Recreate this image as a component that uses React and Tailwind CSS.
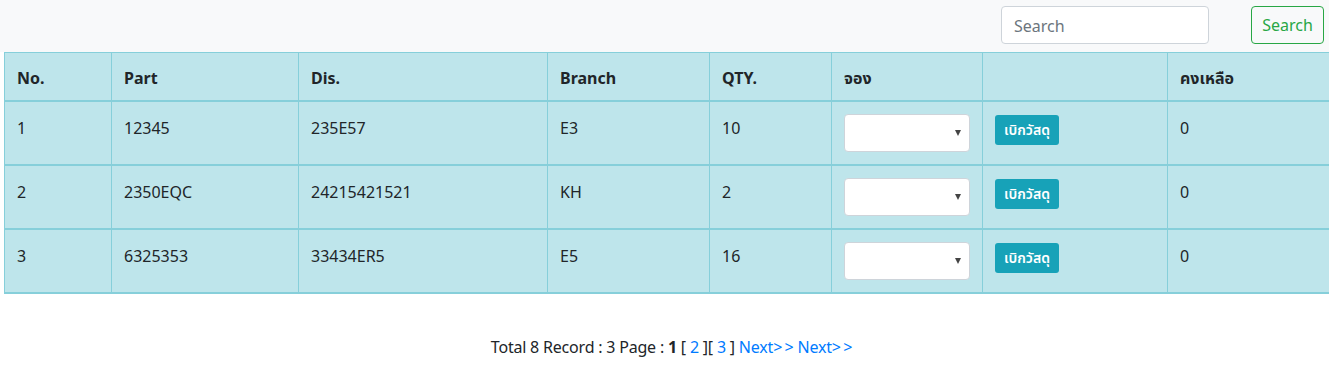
import React from "react";

const rows = [
  { no: "1", part: "12345", dis: "235E57", branch: "E3", qty: "10", left: "0" },
  { no: "2", part: "2350EQC", dis: "24215421521", branch: "KH", qty: "2", left: "0" },
  { no: "3", part: "6325353", dis: "33434ER5", branch: "E5", qty: "16", left: "0" },
];

const widths = [107, 187, 249, 162, 122, 151, 185, 167];

export default function App() {
  const font = { fontFamily: '"Segoe UI", "Noto Sans", "Noto Sans Thai", sans-serif' };
  return (
    <div className="w-[1329px] h-[370px] bg-white text-[#212529] text-base overflow-hidden" style={font}>
      <div className="h-[52px] bg-[#f8f9fa] flex items-start justify-end pt-[6px] pr-[5px]">
        <input
          className="w-[208px] h-[38px] border border-[#ced4da] rounded-[4px] bg-white px-3 pt-[1px] text-base text-[#495057] placeholder:text-[#6c757d] outline-none"
          placeholder="Search"
        />
        <button className="ml-[42px] h-[38px] w-[73px] border border-[#28a745] rounded-[4px] text-[#28a745] text-base bg-transparent">
          Search
        </button>
      </div>
      <div className="pl-[4px] overflow-hidden">
        <table className="border-collapse table-fixed w-[1330px] bg-[#bee5eb]">
          <colgroup>
            {widths.map((w, i) => (
              <col key={i} style={{ width: w }} />
            ))}
          </colgroup>
          <thead>
            <tr>
              {["No.", "Part", "Dis.", "Branch", "QTY.", "จอง", "", "คงเหลือ"].map((h, i) => (
                <th
                  key={i}
                  className="border border-[#86cfda] border-b-2 px-3 pt-[13px] pb-[10px] text-left font-bold leading-6 align-top"
                >
                  {h}
                </th>
              ))}
            </tr>
          </thead>
          <tbody>
            {rows.map((r) => (
              <tr key={r.no}>
                {[r.no, r.part, r.dis, r.branch, r.qty].map((c, i) => (
                  <td key={i} className="border border-[#86cfda] border-b-2 px-3 pt-[14px] pb-[10px] align-top leading-6">
                    {c}
                  </td>
                ))}
                <td className="border border-[#86cfda] border-b-2 px-3 py-3 align-top">
                  <div className="relative w-[126px] h-[38px] bg-white border border-[#ced4da] rounded-[4px]">
                    <span className="absolute right-[8px] top-[15px] w-0 h-0 border-l-[3.5px] border-r-[3.5px] border-t-[6px] border-l-transparent border-r-transparent border-t-[#444]" />
                  </div>
                </td>
                <td className="border border-[#86cfda] border-b-2 px-3 py-3 align-top">
                  <button className="h-[30px] w-[64px] px-0 mt-[1px] bg-[#17a2b8] text-white text-sm font-semibold rounded-[3px] leading-5">
                    เบิกวัสดุ
                  </button>
                </td>
                <td className="border border-[#86cfda] border-b-2 px-3 pt-[14px] pb-[10px] align-top leading-6">{r.left}</td>
              </tr>
            ))}
          </tbody>
        </table>
      </div>
      <div className="mt-[41px] pl-[14px] text-center leading-6 tracking-[-0.2px]">
        Total 8 Record : 3 Page : <b>1</b> [ <a className="text-[#007bff]">2</a> ][ <a className="text-[#007bff]">3</a> ]{" "}
        <a className="text-[#007bff]">Next&gt;&thinsp;&gt;</a> <a className="text-[#007bff]">Next&gt;&thinsp;&gt;</a>
      </div>
    </div>
  );
}
